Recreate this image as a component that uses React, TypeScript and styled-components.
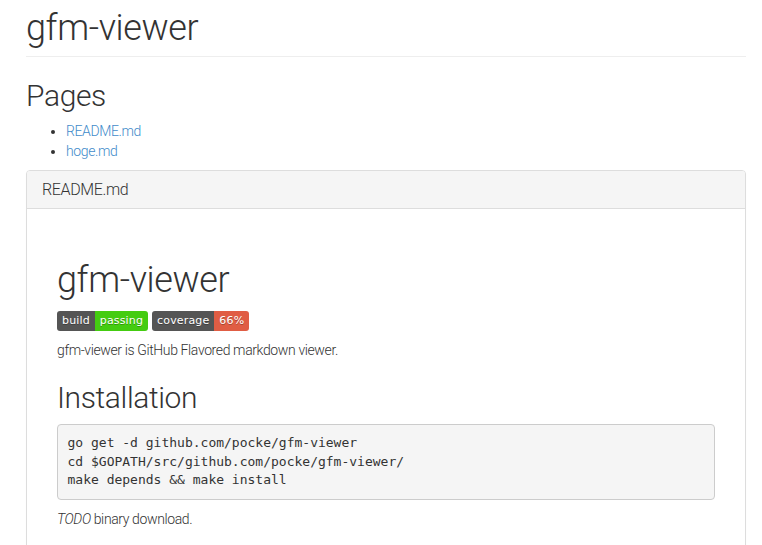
import styled, { createGlobalStyle } from "styled-components";

const GlobalStyle = createGlobalStyle`
  * { box-sizing: border-box; }
  body {
    margin: 0;
    background: #fff;
    color: #333;
    font-family: Roboto, "Liberation Sans", sans-serif;
    font-weight: 300;
    font-size: 14px;
    line-height: 1.428571;
    letter-spacing: -0.027em;
  }
`;

const Container = styled.div`
  width: 720px;
  margin-left: 26px;
`;

const PageHeader = styled.div`
  border-bottom: 1px solid #eee;
  padding-bottom: 7px;
  margin-bottom: 22px;
`;

const Title = styled.h1`
  font-size: 36px;
  font-weight: 300;
  line-height: 1.1;
  margin: 0;
  padding-top: 9px;
`;

const SectionTitle = styled.h2`
  font-size: 30px;
  font-weight: 300;
  line-height: 1.1;
  margin: 0 0 10px;
`;

const PageList = styled.ul`
  margin: 0 0 8px;
  padding-left: 40px;
`;

const Link = styled.a`
  color: #428bca;
  text-decoration: none;
`;

const Panel = styled.div`
  border: 1px solid #ddd;
  border-radius: 4px;
  background: #fff;
  box-shadow: 0 1px 1px rgba(0, 0, 0, 0.05);
`;

const PanelHeading = styled.div`
  background: #f5f5f5;
  border-bottom: 1px solid #ddd;
  padding: 10px 15px;
  border-radius: 3px 3px 0 0;
`;

const PanelTitle = styled.h3`
  margin: 0;
  font-size: 16px;
  font-weight: 300;
  line-height: 1.1;
`;

const PanelBody = styled.div`
  padding: 30px;
`;

const DocTitle = styled.h1`
  font-size: 36px;
  font-weight: 300;
  line-height: 1.1;
  margin: 22px 0 10px;
`;

const DocHeading = styled.h2`
  font-size: 30px;
  font-weight: 300;
  line-height: 1.1;
  margin: 20px 0 10px;
`;

const Badges = styled.p`
  display: flex;
  gap: 4px;
  margin: 0 0 10px;
`;

const Badge = styled.span`
  display: inline-flex;
  height: 20px;
  border-radius: 3px;
  overflow: hidden;
  font-family: "DejaVu Sans", Verdana, sans-serif;
  font-weight: 400;
  font-size: 11px;
  line-height: 20px;
  letter-spacing: 0.15px;
  color: #fff;
  text-shadow: 0 1px 0 rgba(1, 1, 1, 0.3);
`;

const BadgePart = styled.span<{ $bg: string }>`
  background: ${(p) => p.$bg};
  padding: 0 5px;
`;

const Paragraph = styled.p`
  margin: 0 0 10px;
`;

const Pre = styled.pre`
  margin: 0 0 10px;
  padding: 9.5px;
  background: #f5f5f5;
  border: 1px solid #ccc;
  border-radius: 4px;
  font-family: "DejaVu Sans Mono", Menlo, monospace;
  font-size: 13px;
  line-height: 1.428571;
  letter-spacing: 0;
  color: #333;
  white-space: pre;
`;

export default function App() {
  return (
    <>
      <GlobalStyle />
      <Container>
        <PageHeader>
          <Title>gfm-viewer</Title>
        </PageHeader>
        <SectionTitle>Pages</SectionTitle>
        <PageList>
          <li>
            <Link href="#">README.md</Link>
          </li>
          <li>
            <Link href="#">hoge.md</Link>
          </li>
        </PageList>
        <Panel>
          <PanelHeading>
            <PanelTitle>README.md</PanelTitle>
          </PanelHeading>
          <PanelBody>
            <DocTitle>gfm-viewer</DocTitle>
            <Badges>
              <Badge>
                <BadgePart $bg="#555">build</BadgePart>
                <BadgePart $bg="#4c1">passing</BadgePart>
              </Badge>
              <Badge>
                <BadgePart $bg="#555">coverage</BadgePart>
                <BadgePart $bg="#e05d44">66%</BadgePart>
              </Badge>
            </Badges>
            <Paragraph>gfm-viewer is GitHub Flavored markdown viewer.</Paragraph>
            <DocHeading>Installation</DocHeading>
            <Pre>
              {`go get -d github.com/pocke/gfm-viewer
cd $GOPATH/src/github.com/pocke/gfm-viewer/
make depends && make install`}
            </Pre>
            <Paragraph>
              <em>TODO</em> binary download.
            </Paragraph>
          </PanelBody>
        </Panel>
      </Container>
    </>
  );
}
